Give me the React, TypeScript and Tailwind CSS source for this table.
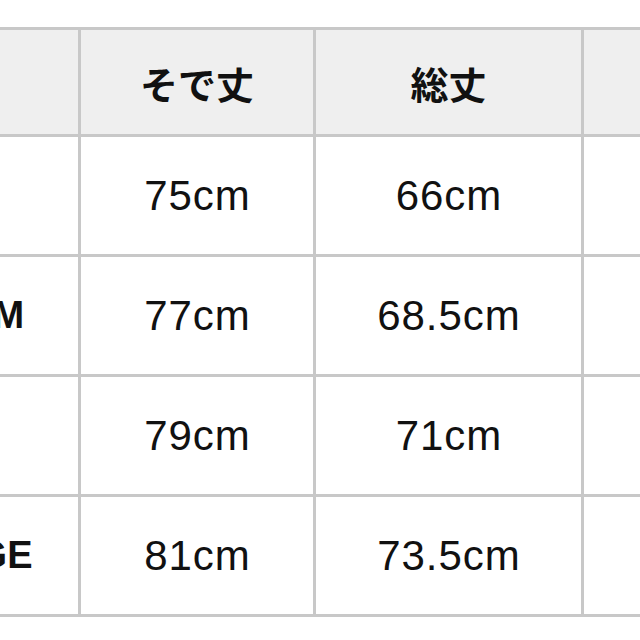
import React from "react"

type Row = { size: string; sleeve: string; length: string }

const rows: Row[] = [
    { size: "S", sleeve: "75cm", length: "66cm" },
    { size: "MEDIUM", sleeve: "77cm", length: "68.5cm" },
    { size: "L", sleeve: "79cm", length: "71cm" },
    { size: "X-LARGE", sleeve: "81cm", length: "73.5cm" },
]

const jp = "font-['Noto_Sans_CJK_JP',sans-serif]"
const num = "font-['Liberation_Sans',Arial,sans-serif]"

export default function App() {
    return (
        <div className="h-[640px] w-[640px] overflow-hidden bg-white pt-[27px] text-[#111]">
            <div
                className="ml-[-187px] grid w-max grid-cols-[262px_232px_265px_200px] grid-rows-[104px_117px_117px_117px_117px]
            gap-[3px] bg-[#c8c8c8] p-[3px]"
            >
                <div className="bg-[#efefef]" />
                <div className={`flex items-center justify-center bg-[#efefef] text-[38px] font-bold ${jp}`}>
                    そで丈
                </div>
                <div className={`flex items-center justify-center bg-[#efefef] text-[38px] font-bold ${jp}`}>
                    総丈
                </div>
                <div className="bg-[#efefef]" />

                {rows.map((r) => (
                    <React.Fragment key={r.size}>
                        <div className={`flex items-center justify-center bg-white text-[38px] font-bold ${num}`}>
                            {r.size}
                        </div>
                        <div className={`flex items-center justify-center bg-white pl-[1px] text-[42px] tracking-[1px] ${num}`}>
                            {r.sleeve}
                        </div>
                        <div className={`flex items-center justify-center bg-white pl-[1px] text-[42px] tracking-[1px] ${num}`}>
                            {r.length}
                        </div>
                        <div className="bg-white" />
                    </React.Fragment>
                ))}
            </div>
        </div>
    )
}
